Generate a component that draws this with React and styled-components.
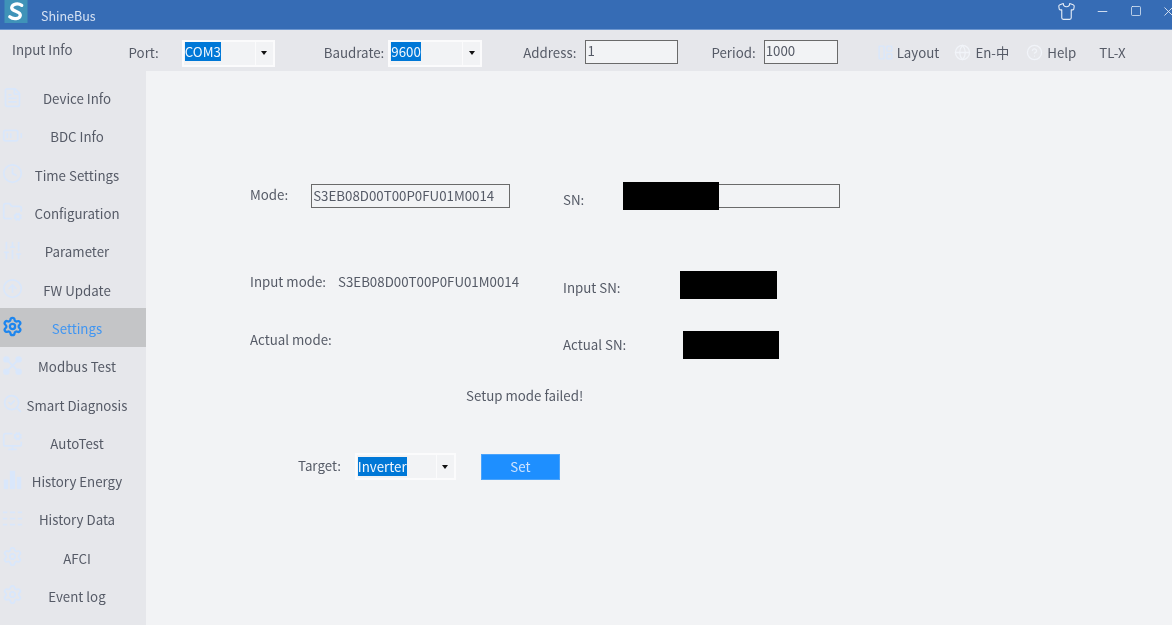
import React from 'react'
import styled, {createGlobalStyle} from 'styled-components'
import {
  FileText, BatteryMedium, Clock, FolderCog, SlidersVertical, CircleArrowUp, Settings,
  SearchCheck, MonitorCog, Shirt, Minus, Square, X,
  LayoutPanelLeft, Globe, CircleHelp
} from 'lucide-react'

const GlobalStyle = createGlobalStyle`
  html, body {
    margin: 0;
    padding: 0;
    height: 100%;
    overflow: hidden;
    background: #f2f3f5;
  }
  body {
    font-family: "Noto Sans CJK SC", "Noto Sans", sans-serif;
    font-size: 13.3px;
    color: #555a66;
  }
  * { box-sizing: border-box; }
`

const ModbusIcon = ({size}) => (
  <svg width={size} height={size} viewBox="0 0 24 24" fill="currentColor" stroke="currentColor" strokeWidth="2.4">
    <path d="M5 5l14 14M19 5L5 19" />
    <circle cx="5" cy="5" r="2.5" />
    <circle cx="19" cy="5" r="2.5" />
    <circle cx="5" cy="19" r="2.5" />
    <circle cx="19" cy="19" r="2.5" />
  </svg>
)

const EnergyIcon = ({size}) => (
  <svg width={size} height={size} viewBox="0 0 24 24" fill="currentColor">
    <rect x="2" y="12" width="5" height="11" />
    <rect x="9" y="2" width="6" height="21" />
    <rect x="17" y="9" width="5" height="14" />
  </svg>
)

const DataIcon = ({size}) => (
  <svg width={size} height={size} viewBox="0 0 24 24" fill="none" stroke="currentColor" strokeWidth="2">
    <path d="M1 5h5M9 5h6M18 5h5M1 12h5M9 12h6M18 12h5M1 19h5M9 19h6M18 19h5" />
  </svg>
)

const menu = [
  ['Device Info', FileText],
  ['BDC Info', BatteryMedium],
  ['Time Settings', Clock],
  ['Configuration', FolderCog],
  ['Parameter', SlidersVertical],
  ['FW Update', CircleArrowUp],
  ['Settings', Settings],
  ['Modbus Test', ModbusIcon],
  ['Smart Diagnosis', SearchCheck],
  ['AutoTest', MonitorCog],
  ['History Energy', EnergyIcon],
  ['History Data', DataIcon],
  ['AFCI', Settings],
  ['Event log', Settings]
]

export default function App() {
  return (
    <Page>
      <GlobalStyle />
      <TitleBar>
        <Logo viewBox="0 0 24 24">
          <rect width="24" height="24" fill="#3f93b8" />
          <path d="M18 5.500C14 3 8 4 7.500 8c-.5 4 9.500 3.500 9 8C16 20 9 20.500 5.500 17.500" fill="none" stroke="#fff" strokeWidth="3.400" strokeLinecap="round" />
        </Logo>
        <AppName>ShineBus</AppName>
        <WindowButtons>
          <Shirt size={19} strokeWidth={1.4} />
          <Minus size={15} strokeWidth={1.4} />
          <Square size={12} strokeWidth={1.5} />
          <X size={15} strokeWidth={1.4} />
        </WindowButtons>
      </TitleBar>

      <Toolbar>
        <InputInfo>Input Info</InputInfo>
        <ToolLabel $gap={56}>Port:</ToolLabel>
        <Combo $gap={23} $width={93} $down={5}>
          <Selected $up={3}>COM3</Selected>
          <Arrow />
        </Combo>
        <ToolLabel $gap={49}>Baudrate:</ToolLabel>
        <Combo $gap={4} $width={94} $down={5}>
          <Selected $up={3}>9600</Selected>
          <Arrow />
        </Combo>
        <ToolLabel $gap={41}>Address:</ToolLabel>
        <TextBox $gap={9} $width={93} readOnly value="1" />
        <ToolLabel $gap={33}>Period:</ToolLabel>
        <TextBox $gap={8} $width={74} readOnly value="1000" />
        <ToolIcon $gap={39} $tint="#d9e7fb"><LayoutPanelLeft size={17} strokeWidth={2} /></ToolIcon>
        <ToolLabel $gap={4}>Layout</ToolLabel>
        <ToolIcon $gap={15}><Globe size={17} strokeWidth={1.8} /></ToolIcon>
        <ToolLabel $gap={5}>En-中</ToolLabel>
        <ToolIcon $gap={17}><CircleHelp size={17} strokeWidth={1.8} /></ToolIcon>
        <ToolLabel $gap={5}>Help</ToolLabel>
        <ToolLabel $gap={23}>TL-X</ToolLabel>
      </Toolbar>

      <Body>
        <Sidebar>
          {menu.map(([name, Icon]) => (
            <MenuItem key={name} $active={name === 'Settings'}>
              <MenuIcon $active={name === 'Settings'}>
                <Icon size={21} strokeWidth={name === 'Settings' ? 2.6 : 2} />
              </MenuIcon>
              {name}
            </MenuItem>
          ))}
        </Sidebar>

        <Main>
          <FormRow $top={111}>
            <Cell>
              <FieldLabel $up={3}>Mode:</FieldLabel>
              <ModeBox readOnly value="S3EB08D00T00P0FU01M0014" />
            </Cell>
            <Cell>
              <FieldLabel $down={6}>SN:</FieldLabel>
              <SnWrap>
                <SnBox readOnly value="" />
                <SnMask />
              </SnWrap>
            </Cell>
          </FormRow>

          <FormRow $top={61}>
            <Cell>
              <FieldLabel $up={8}>Input mode:</FieldLabel>
              <ModeValue>S3EB08D00T00P0FU01M0014</ModeValue>
            </Cell>
            <Cell>
              <FieldLabel $down={4}>Input SN:</FieldLabel>
              <Redacted $gap={59} $width={97} />
            </Cell>
          </FormRow>

          <FormRow $top={31}>
            <Cell>
              <FieldLabel $up={10}>Actual mode:</FieldLabel>
            </Cell>
            <Cell>
              <FieldLabel>Actual SN:</FieldLabel>
              <Redacted $gap={57} $width={96} />
            </Cell>
          </FormRow>

          <Message>Setup mode failed!</Message>

          <TargetRow>
            <FieldLabel $up={3}>Target:</FieldLabel>
            <Combo $gap={14} $width={101}>
              <Selected>Inverter</Selected>
              <Arrow />
            </Combo>
            <SetButton>Set</SetButton>
          </TargetRow>
        </Main>
      </Body>
    </Page>
  )
}

const Page = styled.div`
  width: 1172px;
  height: 625px;
  display: flex;
  flex-direction: column;
  overflow: hidden;
  filter: blur(0.35px);
`

const TitleBar = styled.div`
  height: 30px;
  flex: none;
  display: flex;
  align-items: flex-start;
  background: #366cb5;
  border-bottom: 1px solid #6e97cf;
`

const Logo = styled.svg`
  width: 24px;
  height: 23px;
  margin-left: 4px;
  flex: none;
`

const AppName = styled.span`
  margin: 7px 0 0 13px;
  font-size: 12.5px;
  line-height: 18px;
  color: #d6e2f3;
`

const WindowButtons = styled.div`
  margin-left: auto;
  margin-right: -4px;
  width: 119px;
  height: 22px;
  display: flex;
  align-items: center;
  justify-content: space-between;
  color: #e6edf7;
`

const Toolbar = styled.div`
  height: 41px;
  flex: none;
  display: flex;
  align-items: center;
  padding: 0 0 0 12px;
  background: #e6e7eb;
`

const InputInfo = styled.span`
  margin-bottom: 2px;
  color: #555a66;
`

const ToolLabel = styled.span`
  margin-left: ${p => p.$gap}px;
  margin-top: 3px;
  white-space: nowrap;
`

const ToolIcon = styled.span`
  margin-left: ${p => p.$gap}px;
  margin-top: 3px;
  width: 16px;
  height: 17px;
  display: flex;
  color: ${p => p.$tint || '#f1f4f9'};
  & svg { flex: none; }
`

const Combo = styled.div`
  margin-left: ${p => p.$gap}px;
  margin-top: ${p => p.$down || 0}px;
  width: ${p => p.$width}px;
  height: 27px;
  flex: none;
  display: flex;
  align-items: center;
  padding-left: 1px;
  border: 2px solid #fbfbfc;
  background: #f2f3f5;
`

const Selected = styled.span`
  margin-bottom: ${p => p.$up || 0}px;
  background: #0078d7;
  color: #f4f8fd;
  line-height: 19px;
`

const Arrow = styled.span`
  margin-left: auto;
  width: 18px;
  height: 100%;
  flex: none;
  display: flex;
  align-items: center;
  justify-content: center;
  border-left: 1px solid #fbfbfc;
  &::after {
    content: '';
    border-left: 3px solid transparent;
    border-right: 3px solid transparent;
    border-top: 4px solid #111;
  }
`

const TextBox = styled.input`
  margin-left: ${p => p.$gap}px;
  margin-top: 2px;
  width: ${p => p.$width}px;
  height: 24px;
  flex: none;
  padding: 0 0 3px 1px;
  border: 1px solid #6a6a6a;
  background: #f2f3f5;
  font: inherit;
  color: #555a66;
  outline: none;
`

const Body = styled.div`
  flex: 1;
  display: flex;
  min-height: 0;
`

const Sidebar = styled.div`
  width: 146px;
  flex: none;
  padding-top: 7.5px;
  background: #e6e7eb;
`

const MenuItem = styled.div`
  height: 38.3px;
  position: relative;
  display: flex;
  align-items: center;
  justify-content: center;
  padding: 2px 0 0 8px;
  white-space: nowrap;
  background: ${p => (p.$active ? '#c4c5c7' : 'transparent')};
  color: ${p => (p.$active ? '#3f95f2' : '#555a66')};
`

const MenuIcon = styled.span`
  position: absolute;
  left: 2px;
  top: 8px;
  display: flex;
  color: ${p => (p.$active ? '#1e86ee' : '#d9e7fb')};
`

const Main = styled.div`
  flex: 1;
  padding-left: 104px;
  background: #f2f3f5;
`

const FormRow = styled.div`
  margin-top: ${p => p.$top}px;
  height: 28px;
  display: grid;
  grid-template-columns: 313px 1fr;
`

const Cell = styled.div`
  display: flex;
  align-items: center;
`

const FieldLabel = styled.span`
  margin-top: ${p => p.$down || 0}px;
  margin-bottom: ${p => p.$up || 0}px;
  white-space: nowrap;
`

const ModeBox = styled.input`
  margin-left: 23px;
  width: 199px;
  height: 24px;
  padding: 0 0 2px 1px;
  border: 1px solid #6a6a6a;
  background: #f2f3f5;
  font: inherit;
  color: #555a66;
  outline: none;
`

const ModeValue = styled.span`
  margin: 0 0 8px 12px;
  white-space: nowrap;
`

const SnWrap = styled.div`
  margin-left: 39px;
  position: relative;
  width: 217px;
  height: 28px;
  display: flex;
  align-items: center;
`

const SnBox = styled.input`
  width: 100%;
  height: 24px;
  border: 1px solid #6a6a6a;
  background: #f2f3f5;
  outline: none;
`

const SnMask = styled.div`
  position: absolute;
  left: 0;
  top: 0;
  width: 96px;
  height: 28px;
  background: #000;
`

const Redacted = styled.div`
  margin-left: ${p => p.$gap}px;
  width: ${p => p.$width}px;
  height: 28px;
  background: #000;
`

const Message = styled.div`
  margin-top: 28px;
  padding-left: 216px;
  height: 20px;
  line-height: 20px;
`

const TargetRow = styled.div`
  margin-top: 47px;
  padding-left: 48px;
  display: flex;
  align-items: center;
`

const SetButton = styled.button`
  margin-left: 25px;
  width: 79px;
  height: 26px;
  border: 1px solid #4aa3fb;
  background: #1e8fff;
  color: #cfe4ff;
  font: inherit;
`
